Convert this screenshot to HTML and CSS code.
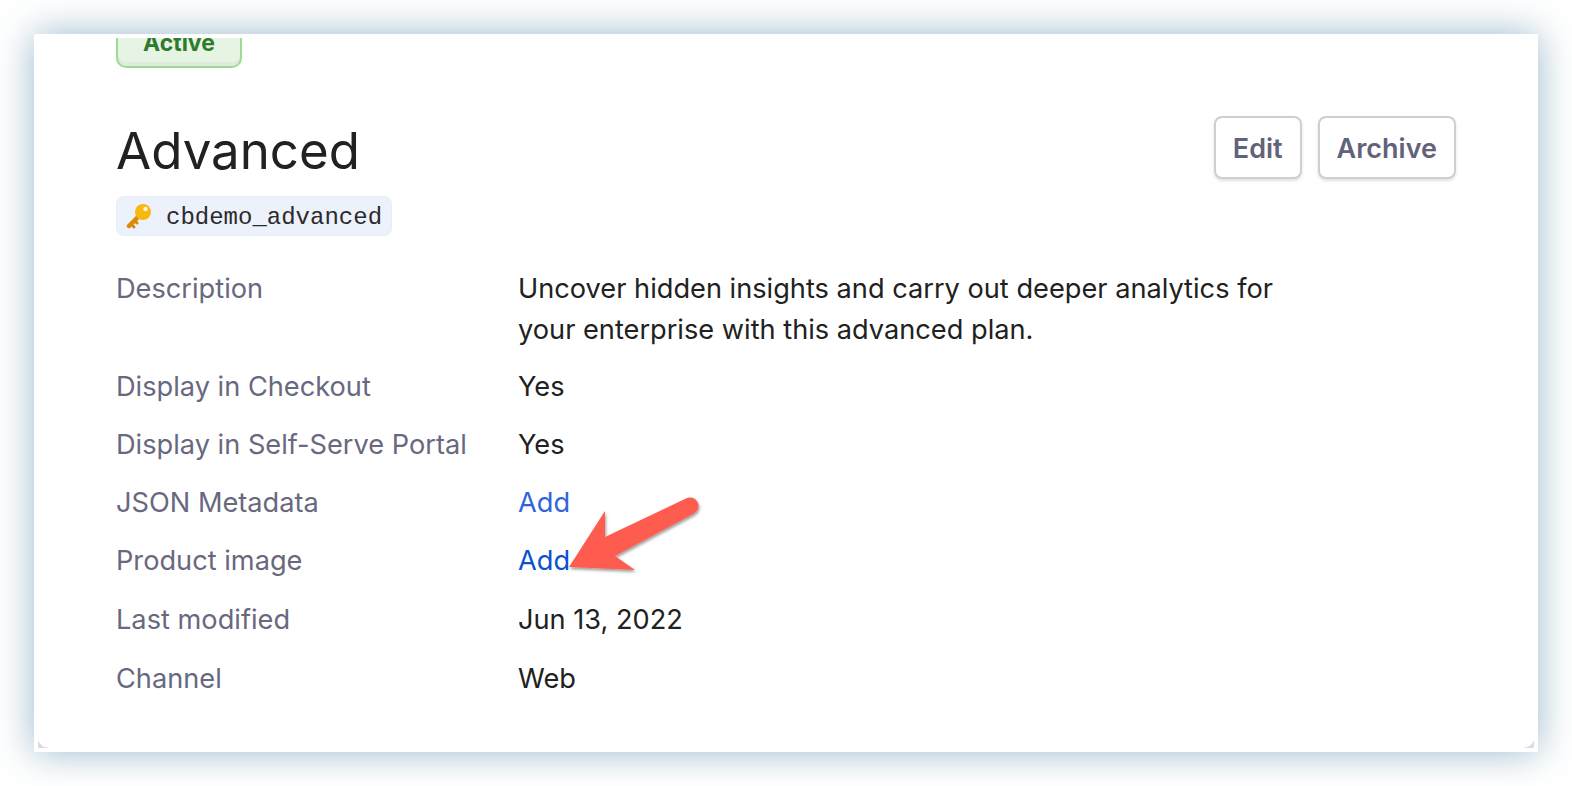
FILE: index.html
```html
<!DOCTYPE html>
<html lang="en">
<head>
    <meta charset="UTF-8">
    <meta name="viewport" content="width=device-width, initial-scale=1.0">
    <title>Advanced plan</title>
    <link rel="stylesheet" href="styles.css">
</head>
<body>
    <div class="card">
        <div class="badge-clip">
            <span class="badge">Active</span>
        </div>

        <div class="plan-header">
            <div>
                <h1>Advanced</h1>
                <span class="plan-id">
                    <svg class="key" viewBox="0 0 26 26" width="26" height="26">
                        <path d="M15 11 L3 23" stroke="#d98a06" stroke-width="4.500" stroke-linecap="round" fill="none"/>
                        <path d="M5 21 L8 24 M8.500 17.500 L11 20" stroke="#d98a06" stroke-width="3" stroke-linecap="round" fill="none"/>
                        <circle cx="17" cy="9" r="8" fill="#f8b90f"/>
                        <circle cx="19.500" cy="6" r="2.300" fill="#fdf3d0"/>
                    </svg>
                    cbdemo_advanced
                </span>
            </div>
            <div class="actions">
                <button type="button">Edit</button>
                <button type="button">Archive</button>
            </div>
        </div>

        <div class="details">
            <div class="row row-first">
                <div class="label">Description</div>
                <div class="value">Uncover hidden insights and carry out deeper analytics for your enterprise with this advanced plan.</div>
            </div>
            <div class="row">
                <div class="label">Display in Checkout</div>
                <div class="value">Yes</div>
            </div>
            <div class="row">
                <div class="label">Display in Self-Serve Portal</div>
                <div class="value">Yes</div>
            </div>
            <div class="row">
                <div class="label">JSON Metadata</div>
                <div class="value"><a href="#">Add</a></div>
            </div>
            <div class="row">
                <div class="label">Product image</div>
                <div class="value value-marked">
                    <a href="#" class="link-hover">Add</a>
                    <svg class="arrow" viewBox="0 0 140 80" width="140" height="80">
                        <defs>
                            <filter id="arrowShadow" x="-10%" y="-20%" width="125%" height="140%">
                                <feDropShadow dx="1" dy="2" stdDeviation="1.500" flood-color="#000" flood-opacity="0.4"/>
                            </filter>
                        </defs>
                        <path d="M11 62 L47 6 L47 32 L128 -6.500 A8.500 8.500 0 0 1 136 8.500 L57 51 L77 65 Z" fill="#fd5c4f" filter="url(#arrowShadow)"/>
                    </svg>
                </div>
            </div>
            <div class="row row-spaced">
                <div class="label">Last modified</div>
                <div class="value">Jun 13, 2022</div>
            </div>
            <div class="row row-spaced">
                <div class="label">Channel</div>
                <div class="value">Web</div>
            </div>
        </div>

        <span class="corner corner-left"></span>
        <span class="corner corner-right"></span>
    </div>
</body>
</html>
```

FILE: styles.css
```css
* {
    margin: 0;
    padding: 0;
    box-sizing: border-box;
}

body {
    font-family: 'Inter', sans-serif;
    background: #fff;
    height: 786px;
    padding: 34px;
    overflow: hidden;
}

.card {
    position: relative;
    background: #fff;
    height: 718px;
    padding: 4px 82px 0;
    box-shadow: 0 0 36px rgba(120, 160, 185, 0.75);
}

.badge-clip {
    display: flex;
    align-items: flex-end;
    height: 30px;
    overflow: hidden;
}

.badge {
    display: block;
    width: 126px;
    height: 50px;
    line-height: 47px;
    text-align: center;
    font-size: 23px;
    font-weight: 700;
    color: #2f7a2c;
    background: #e6f4e3;
    border: 2px solid #9ddb95;
    border-radius: 10px;
    box-shadow: inset 0 -4px 0 #dfeadd;
}

.plan-header {
    display: flex;
    justify-content: space-between;
    align-items: flex-start;
    margin-top: 48px;
}

h1 {
    font-size: 51px;
    font-weight: 400;
    line-height: 70px;
    color: #212121;
}

.plan-id {
    display: inline-flex;
    align-items: center;
    gap: 14px;
    height: 40px;
    margin-top: 10px;
    padding: 2px 9px 0;
    font-family: 'Liberation Mono', monospace;
    font-size: 24px;
    color: #2b2b2b;
    background: #ecf1fb;
    border: 1px solid #e6ecf8;
    border-radius: 8px;
}

.key {
    margin-top: -3px;
}

.actions {
    display: flex;
    gap: 16px;
}

button {
    height: 63px;
    padding: 2px 17px 0;
    font-family: 'Inter', sans-serif;
    font-size: 27px;
    font-weight: 600;
    color: #62627a;
    background: #fff;
    border: 2px solid #cfced4;
    border-radius: 8px;
    box-shadow: 0 2px 3px rgba(60, 60, 80, 0.15);
}

.details {
    margin-top: 32px;
}

.row {
    display: grid;
    grid-template-columns: 402px 770px;
    font-size: 27.2px;
    line-height: 41px;
    margin-top: 17px;
}

.row-first {
    margin-top: 0;
    margin-bottom: -1px;
}

.row-spaced {
    margin-top: 18px;
}

.label {
    color: #68687f;
}

.value {
    color: #212121;
}

.value-marked {
    position: relative;
}

a {
    color: #2f65dc;
    text-decoration: none;
}

.link-hover {
    color: #0b52d0;
}

.arrow {
    position: absolute;
    left: 40px;
    top: -35px;
    overflow: visible;
}

.corner {
    position: absolute;
    bottom: 4px;
    width: 12px;
    height: 8px;
    background: #dcd8e8;
}

.corner-left {
    left: 4px;
    clip-path: path('M0 0 Q2 7 12 8 L0 8 Z');
}

.corner-right {
    right: 4px;
    clip-path: path('M12 0 Q10 7 0 8 L12 8 Z');
}
```
